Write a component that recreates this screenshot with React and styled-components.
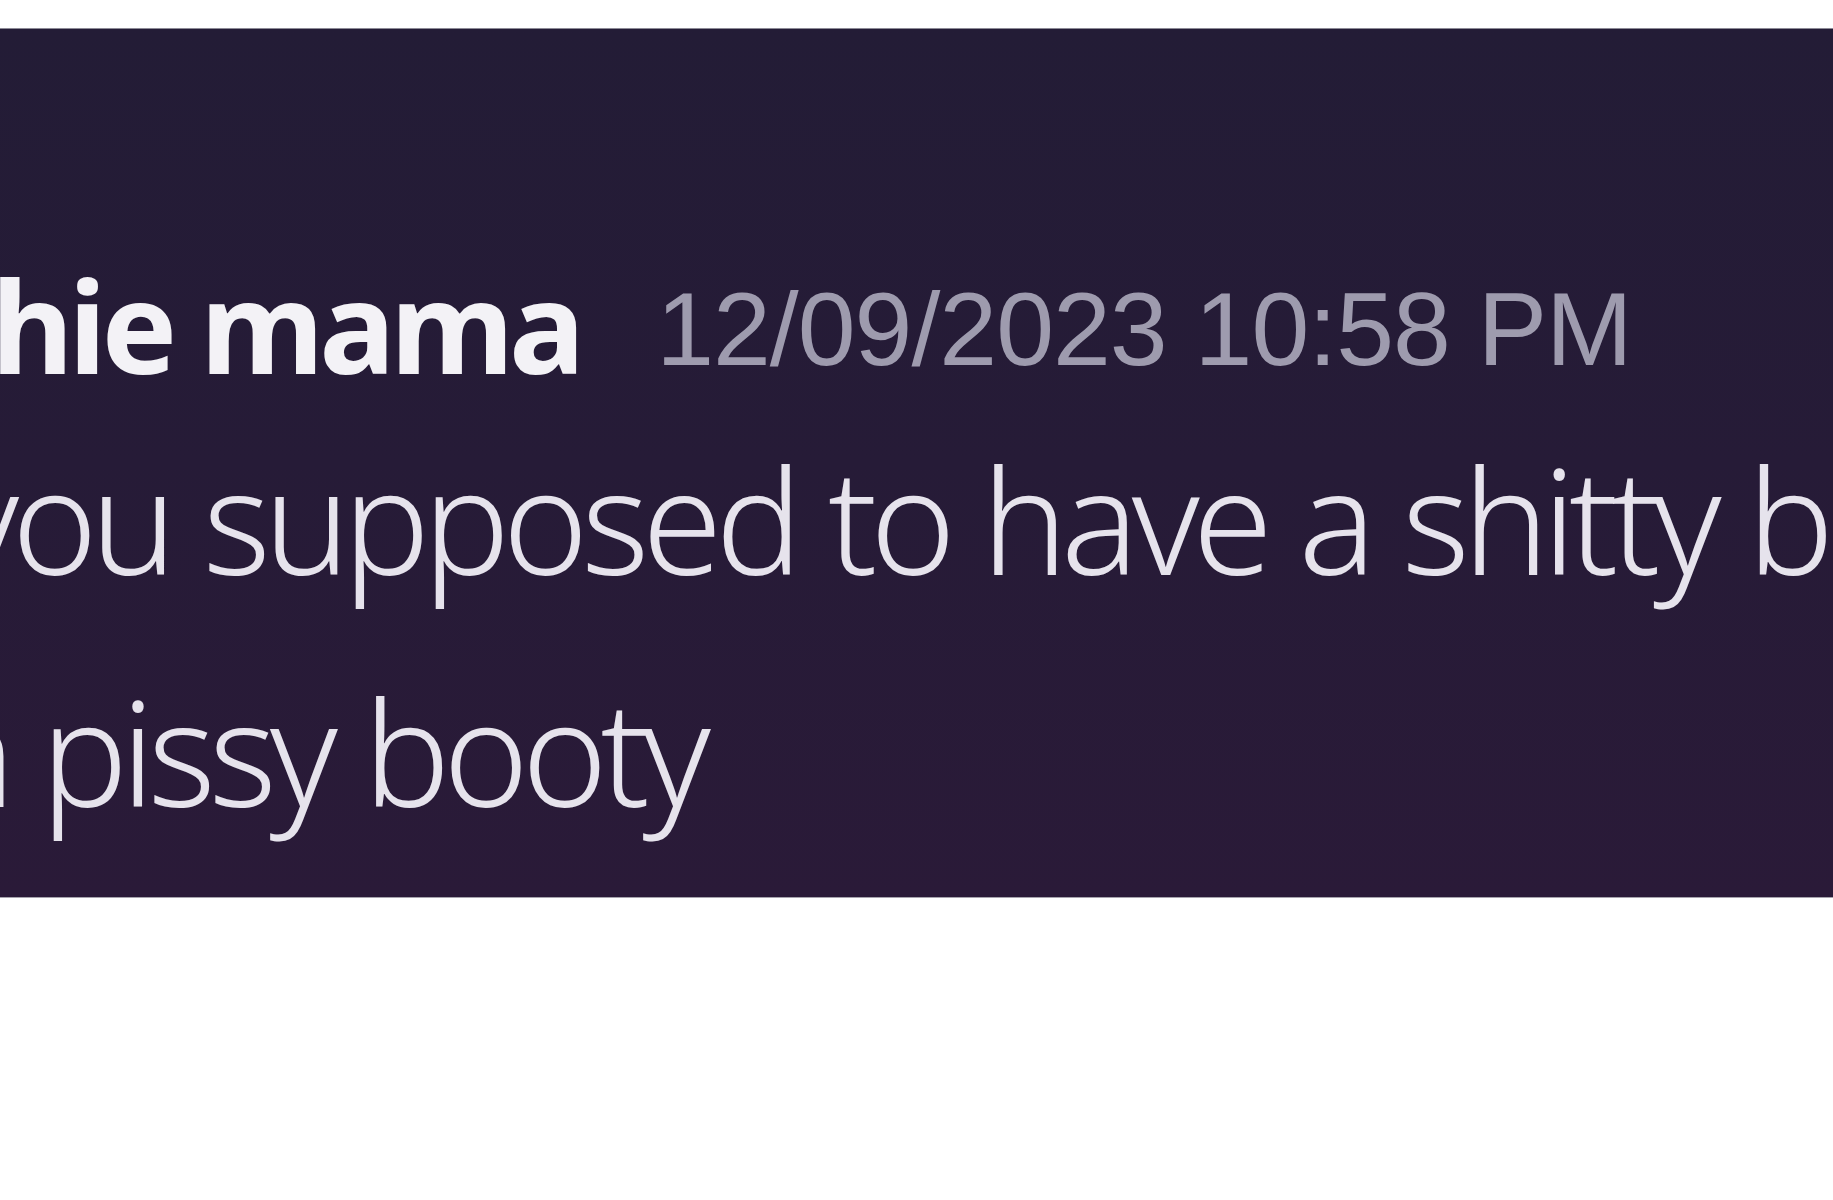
import React from "react";
import styled, { createGlobalStyle } from "styled-components";

const Global = createGlobalStyle`
  html, body { margin: 0; padding: 0; background: #ffffff; }
  body { overflow: hidden; width: 1833px; height: 1200px; }
`;

const Page = styled.div`
  width: 1833px;
  height: 1200px;
  background: #ffffff;
  padding-top: 28px;
  box-sizing: border-box;
  overflow: hidden;
`;

const Band = styled.section`
  height: 870px;
  background: linear-gradient(180deg, #231c36 0%, #261b37 50%, #2a1a38 100%);
  border-top: 1px solid #8c8a96;
  border-bottom: 1px solid #a6a3ad;
  overflow: hidden;
  padding-top: 221px;
  box-sizing: border-box;
`;

const Message = styled.div`
  margin-left: -9px;
  white-space: nowrap;
`;

const Header = styled.div`
  height: 150px;
  line-height: 150px;
  white-space: nowrap;
`;

const Username = styled.span`
  font-family: "Noto Sans", sans-serif;
  font-weight: 700;
  font-size: 127px;
  color: #f3f2f6;
  letter-spacing: -5px;
`;

const Timestamp = styled.span`
  font-family: "Liberation Sans", Arial, sans-serif;
  font-size: 104px;
  color: #9e9bae;
  letter-spacing: -1px;
  margin-left: 76px;
  vertical-align: 9px;
`;

const Body = styled.div`
  margin-top: 3px;
`;

const Line = styled.div`
  font-family: "Noto Sans", sans-serif;
  font-weight: 300;
  font-size: 145px;
  letter-spacing: -7px;
  word-spacing: 2px;
  line-height: 232px;
  color: #e6e3ec;
  white-space: nowrap;
  margin-left: ${(p) => p.$indent}px;
`;

export default function App() {
  return (
    <>
      <Global />
      <Page>
        <Band>
          <Message>
            <Header>
              <Username>hie mama</Username>
              <Timestamp>12/09/2023 10:58 PM</Timestamp>
            </Header>
            <Body>
              <Line $indent={-40}>you supposed to have a shitty b</Line>
              <Line $indent={-62}>n pissy booty</Line>
            </Body>
          </Message>
        </Band>
      </Page>
    </>
  );
}
